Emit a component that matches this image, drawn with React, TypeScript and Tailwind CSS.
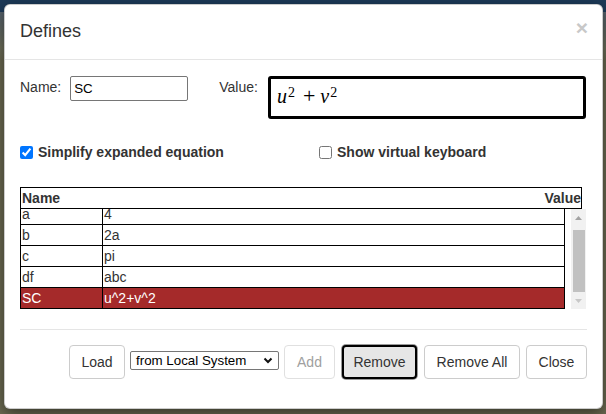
import React from "react";

const rows = [
  { n: "a", v: "4" },
  { n: "b", v: "2a" },
  { n: "c", v: "pi" },
  { n: "df", v: "abc" },
  { n: "SC", v: "u^2+v^2", sel: true },
];

export default function App() {
  return (
    <div
      className="w-[606px] h-[414px] overflow-hidden pt-[4px] pl-[4px] bg-[linear-gradient(to_bottom,#1d3a58_0px,#1d3a58_12px,#56626c_12px,#6f705c_48px,#6c6b52_60px)]"
      style={{ fontFamily: '"Liberation Sans", Arial, sans-serif' }}
    >
      <div className="w-[599px] h-[405px] bg-white rounded-[6px] border border-black/20 shadow-[0_5px_15px_rgba(0,0,0,0.5)] flex flex-col">
        {/* Header */}
        <div className="flex justify-between items-start px-[15px] pt-[13px] pb-[15px] border-b border-[#e5e5e5]">
          <div className="text-[18px] leading-[26px] text-[#333]">Defines</div>
          <span className="text-[21px] font-bold leading-none text-[#c8c8c8] mt-[-1px] mr-[-1px]">×</span>
        </div>

        {/* Body */}
        <div className="px-[15px] pt-[16px] flex flex-col">
          <div className="flex items-start">
            <div className="text-[14px] leading-[20px] text-[#333] mt-[1px]">Name:</div>
            <input
              value="SC"
              readOnly
              className="ml-[9px] w-[118px] h-[25px] border border-[#767676] rounded-[2px] px-[3px] text-[13.33px] text-black outline-none"
            />
            <div className="ml-[31px] text-[14px] leading-[20px] text-[#333] mt-[1px]">Value:</div>
            <div className="ml-[10px] w-[318px] h-[43px] border-[3px] border-black rounded-[3px] pl-[6px] pt-[3px]">
              <div
                className="text-[20px] leading-[28px] text-black whitespace-nowrap"
                style={{ fontFamily: '"Liberation Serif", "DejaVu Serif", serif' }}
              >
                <span className="italic">u</span>
                <span className="text-[14px] align-[6px] leading-none ml-[1px]">2</span>
                <span className="text-[22px] ml-[8px] mr-[5px]">+</span>
                <span className="italic">v</span>
                <span className="text-[14px] align-[6px] leading-none ml-[1px]">2</span>
              </div>
            </div>
          </div>

          <div className="flex items-center mt-[23px] h-[20px]">
            <div className="flex items-center w-[299px]">
              <input type="checkbox" checked readOnly className="w-[13px] h-[13px] m-0" />
              <span className="ml-[5px] text-[14px] font-bold leading-[20px] text-[#333]">
                Simplify expanded equation
              </span>
            </div>
            <div className="flex items-center">
              <input type="checkbox" readOnly className="w-[13px] h-[13px] m-0" />
              <span className="ml-[5px] text-[14px] font-bold leading-[20px] text-[#333]">
                Show virtual keyboard
              </span>
            </div>
          </div>

          {/* Table */}
          <div className="mt-[25px] w-[562px] h-[22px] border border-black flex justify-between text-[14px] leading-[20px] font-bold text-[#333]">
            <span className="pl-[1px]">Name</span>
            <span>Value</span>
          </div>
          <div className="w-[566px] h-[100px] overflow-hidden flex">
            <div className="w-[545px] flex flex-col mt-[-5px] text-[14px] leading-[21px]">
              {rows.map((r) => (
                <div
                  key={r.n}
                  className={
                    "flex h-[21px] shrink-0 border-x border-b border-black " +
                    (r.sel ? "bg-[#a52a2a] text-white" : "bg-white text-[#333]")
                  }
                >
                  <div className="w-[82px] h-[20px] border-r border-black pl-[1px]">{r.n}</div>
                  <div className="pl-[1px] h-[20px]">{r.v}</div>
                </div>
              ))}
            </div>
            <div className="ml-auto w-[15px] h-[100px] bg-[#f1f1f1] flex flex-col items-center">
              <div className="h-[17px] flex items-center justify-center">
                <svg width="7" height="4" viewBox="0 0 7 4">
                  <polygon points="3.5,0 7,4 0,4" fill="#a3a3a3" />
                </svg>
              </div>
              <div className="mt-[4px] w-[12px] h-[62px] bg-[#c1c1c1]" />
              <div className="h-[17px] flex items-center justify-center">
                <svg width="7" height="4" viewBox="0 0 7 4">
                  <polygon points="0,0 7,0 3.5,4" fill="#c8c8c8" />
                </svg>
              </div>
            </div>
          </div>

          <div className="mt-[20px] h-px w-[567px] bg-[#e5e5e5]" />

          {/* Footer buttons */}
          <div className="mt-[15px] flex items-start justify-end text-[14px] leading-[20px]">
            <button className="w-[56px] h-[34px] border border-[#ccc] rounded-[4px] bg-white text-[#333]">Load</button>
            <div className="ml-[5px] mt-[6px] w-[149px] h-[19px] border border-[#767676] rounded-[2px] flex items-center justify-between pl-[5px] pr-[5px] text-[13.33px] leading-none text-black">
              <span>from Local System</span>
              <svg width="10" height="7" viewBox="0 0 10 7">
                <polyline points="1.5,1.5 5,5 8.5,1.5" fill="none" stroke="#111" strokeWidth="2" />
              </svg>
            </div>
            <button className="ml-[5px] w-[51px] h-[34px] border border-[#e0e0e0] rounded-[4px] bg-white text-[#a0a0a0]">Add</button>
            <button className="ml-[7px] w-[75px] h-[34px] border-2 border-black rounded-[4px] bg-[#e6e6e6] text-[#333] shadow-[0_0_0_1px_#9a9a9a]">Remove</button>
            <button className="ml-[7px] w-[96px] h-[34px] border border-[#ccc] rounded-[4px] bg-white text-[#333]">Remove All</button>
            <button className="ml-[6px] w-[61px] h-[34px] border border-[#ccc] rounded-[4px] bg-white text-[#333]">Close</button>
          </div>
        </div>
      </div>
    </div>
  );
}
